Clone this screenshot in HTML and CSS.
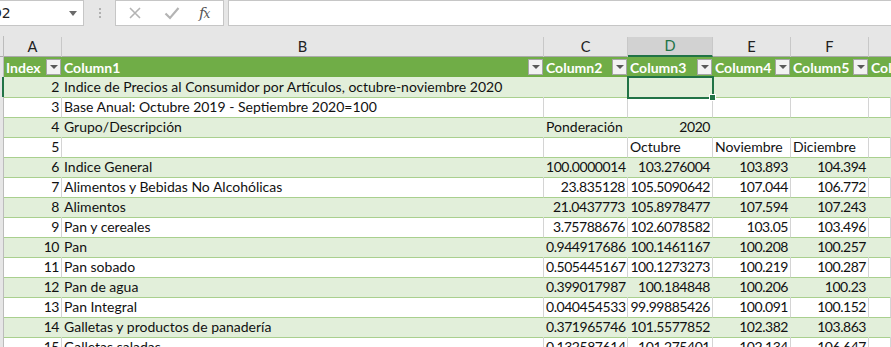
FILE: index.html
```html
<!DOCTYPE html>
<html lang="es">
<head>
  <meta charset="UTF-8" />
  <title>Indice de Precios</title>
  <link rel="stylesheet" href="styles.css">
</head>
<body>

<!-- barra de formulas -->
<div class="formula-bar">
  <div class="name-box"><span class="ref">D2</span><span class="caret"></span></div>
  <div class="grip"><i></i><i></i><i></i></div>
  <div class="fx-buttons">
    <svg class="ico" width="14" height="14" viewBox="0 0 14 14"><path d="M2 2 L12 12 M12 2 L2 12" stroke="#b4b4b4" stroke-width="1.6" fill="none"/></svg>
    <svg class="ico" width="16" height="14" viewBox="0 0 16 14"><path d="M1.5 7.5 L6 12 L14.5 2" stroke="#b4b4b4" stroke-width="2.2" fill="none"/></svg>
    <span class="fx">f<small>x</small></span>
  </div>
  <div class="formula-input"></div>
</div>

<div class="sheet">
  <!-- letras de columna -->
  <div class="row col-heads">
    <div class="corner"></div>
    <div class="ch">A</div>
    <div class="ch">B</div>
    <div class="ch">C</div>
    <div class="ch sel">D</div>
    <div class="ch">E</div>
    <div class="ch">F</div>
    <div class="ch last"></div>
  </div>

  <!-- encabezado de tabla -->
  <div class="row tbl-head">
    <div class="rh"></div>
    <div class="th"><span>Index</span><b class="dd"></b></div>
    <div class="th"><span>Column1</span><b class="dd"></b></div>
    <div class="th"><span>Column2</span><b class="dd"></b></div>
    <div class="th"><span>Column3</span><b class="dd"></b></div>
    <div class="th"><span>Column4</span><b class="dd"></b></div>
    <div class="th"><span>Column5</span><b class="dd"></b></div>
    <div class="th"><span>Col</span></div>
  </div>

  <div id="rows"></div>
</div>

<script>
  const data = [
    [2, "Indice de Precios al Consumidor por Artículos, octubre-noviembre 2020", "", "", "", ""],
    [3, "Base Anual: Octubre 2019 - Septiembre 2020=100", "", "", "", ""],
    [4, "Grupo/Descripción", "Ponderación", "2020", "", ""],
    [5, "", "", "Octubre", "Noviembre", "Diciembre"],
    [6, "Indice General", "100.0000014", "103.276004", "103.893", "104.394"],
    [7, "Alimentos y Bebidas No Alcohólicas", "23.835128", "105.5090642", "107.044", "106.772"],
    [8, "Alimentos", "21.0437773", "105.8978477", "107.594", "107.243"],
    [9, "Pan y cereales", "3.75788676", "102.6078582", "103.05", "103.496"],
    [10, "Pan", "0.944917686", "100.1461167", "100.208", "100.257"],
    [11, "Pan sobado", "0.505445167", "100.1273273", "100.219", "100.287"],
    [12, "Pan de agua", "0.399017987", "100.184848", "100.206", "100.23"],
    [13, "Pan Integral", "0.040454533", "99.99885426", "100.091", "100.152"],
    [14, "Galletas y productos de panadería", "0.371965746", "101.5577852", "102.382", "103.863"],
    [15, "Galletas saladas", "0.132587614", "101.275401", "102.134", "106.647"]
  ];

  const rows = document.getElementById("rows");

  data.forEach(function (r) {
    const row = document.createElement("div");
    row.className = "row data" + (r[0] % 2 === 0 ? " band" : "");
    if (r[0] === 2) row.className += " active";

    let html = '<div class="rh"></div>';
    html += '<div class="td num">' + r[0] + '</div>';
    html += '<div class="td">' + r[1] + '</div>';
    for (let i = 2; i < 6; i++) {
      const v = r[i];
      const isNum = v !== "" && !isNaN(Number(v));
      let cls = "td" + (isNum ? " num" : "");
      if (r[0] === 2 && i === 3) cls += " selected";
      html += '<div class="' + cls + '">' + v + '</div>';
    }
    html += '<div class="td"></div>';
    row.innerHTML = html;
    rows.appendChild(row);
  });
</script>

</body>
</html>
```

FILE: styles.css
```css
body {
  margin: 0;
  background: #e6e6e6;
  font-family: Lato, "DejaVu Sans", sans-serif;
  overflow: hidden;
  width: 891px;
  height: 347px;
}

/* Formula bar */
.formula-bar {
  display: flex;
  align-items: stretch;
  height: 26px;
}

.name-box {
  width: 84px;
  height: 26px;
  box-sizing: border-box;
  background: #fff;
  border: 1px solid #c6c6c6;
  border-left: none;
  position: relative;
  overflow: hidden;
  font-family: "DejaVu Sans", sans-serif;
  font-size: 14px;
  line-height: 24px;
  color: #222;
}

.name-box .ref {
  margin-left: -9px;
}

.name-box .caret {
  position: absolute;
  right: 6px;
  top: 10px;
  border-left: 4px solid transparent;
  border-right: 4px solid transparent;
  border-top: 5px solid #6a6a6a;
}

.grip {
  width: 31px;
  display: flex;
  flex-direction: column;
  align-items: center;
  justify-content: center;
  gap: 2px;
}

.grip i {
  width: 2px;
  height: 2px;
  background: #b0b0b0;
}

.fx-buttons {
  width: 109px;
  height: 26px;
  box-sizing: border-box;
  background: #fff;
  border: 1px solid #c6c6c6;
  display: flex;
  align-items: center;
  padding-left: 12px;
}

.fx-buttons .ico:first-child {
  margin-right: 22px;
}

.fx-buttons .ico:nth-child(2) {
  margin-right: 19px;
}

.fx {
  font-family: "DejaVu Serif", serif;
  font-style: italic;
  font-size: 15px;
  color: #555;
  letter-spacing: -1px;
}

.fx small {
  font-size: 12px;
}

.formula-input {
  flex: 1;
  margin-left: 4px;
  height: 26px;
  box-sizing: border-box;
  background: #fff;
  border: 1px solid #c6c6c6;
  border-right: none;
}

/* Sheet grid */
.sheet {
  margin-top: 10px;
  font-size: 14px;
}

.row {
  display: grid;
  grid-template-columns: 4px 58px 482px 84px 85px 78px 78px 1fr;
  height: 20px;
  box-sizing: border-box;
}

.col-heads {
  height: 21px;
  border-bottom: 1px solid #ababab;
}

.corner {
  border-right: 1px solid #bcbcbc;
}

.ch {
  text-align: center;
  line-height: 20px;
  color: #222;
  border-right: 1px solid #c8c8c8;
  margin-top: 1px;
  font-size: 14.6px;
}

.ch.sel {
  background: #d2d2d2;
  color: #217346;
  border-bottom: 2px solid #217346;
  line-height: 18px;
}

.ch.last {
  border-right: none;
}

.rh {
  background: #e6e6e6;
  border-right: 1px solid #bcbcbc;
  border-bottom: 1px solid #d0d0d0;
}

.tbl-head {
  background: #70ad47;
}

.tbl-head .rh {
  border-bottom: none;
}

.th {
  display: flex;
  justify-content: space-between;
  align-items: center;
  color: #fff;
  font-weight: bold;
  padding-left: 2px;
  overflow: hidden;
  white-space: nowrap;
}

.dd {
  width: 15px;
  height: 16px;
  box-sizing: border-box;
  margin-right: 1px;
  background: #f2f2f2;
  border: 1px solid #a6a6a6;
  position: relative;
  flex-shrink: 0;
}

.dd::after {
  content: "";
  position: absolute;
  left: 3px;
  top: 5px;
  border-left: 4px solid transparent;
  border-right: 4px solid transparent;
  border-top: 4px solid #595959;
}

.data {
  background: #fff;
}

.data.band {
  background: #e2efda;
}

.td {
  border-bottom: 1px solid #a9d08e;
  border-right: 1px solid #d4d4d4;
  padding: 0 2px;
  line-height: 20px;
  color: #111;
  white-space: nowrap;
  position: relative;
}

.band .td {
  border-right-color: transparent;
}

.td.num {
  text-align: right;
  letter-spacing: -0.45px;
}

.data.active .rh {
  border-right: 2px solid #217346;
}

.td.selected {
  outline: 2px solid #217346;
  outline-offset: -1px;
  z-index: 2;
}

.td.selected::after {
  content: "";
  position: absolute;
  right: -4px;
  bottom: -4px;
  width: 5px;
  height: 5px;
  background: #217346;
  border: 1px solid #fff;
}
```
